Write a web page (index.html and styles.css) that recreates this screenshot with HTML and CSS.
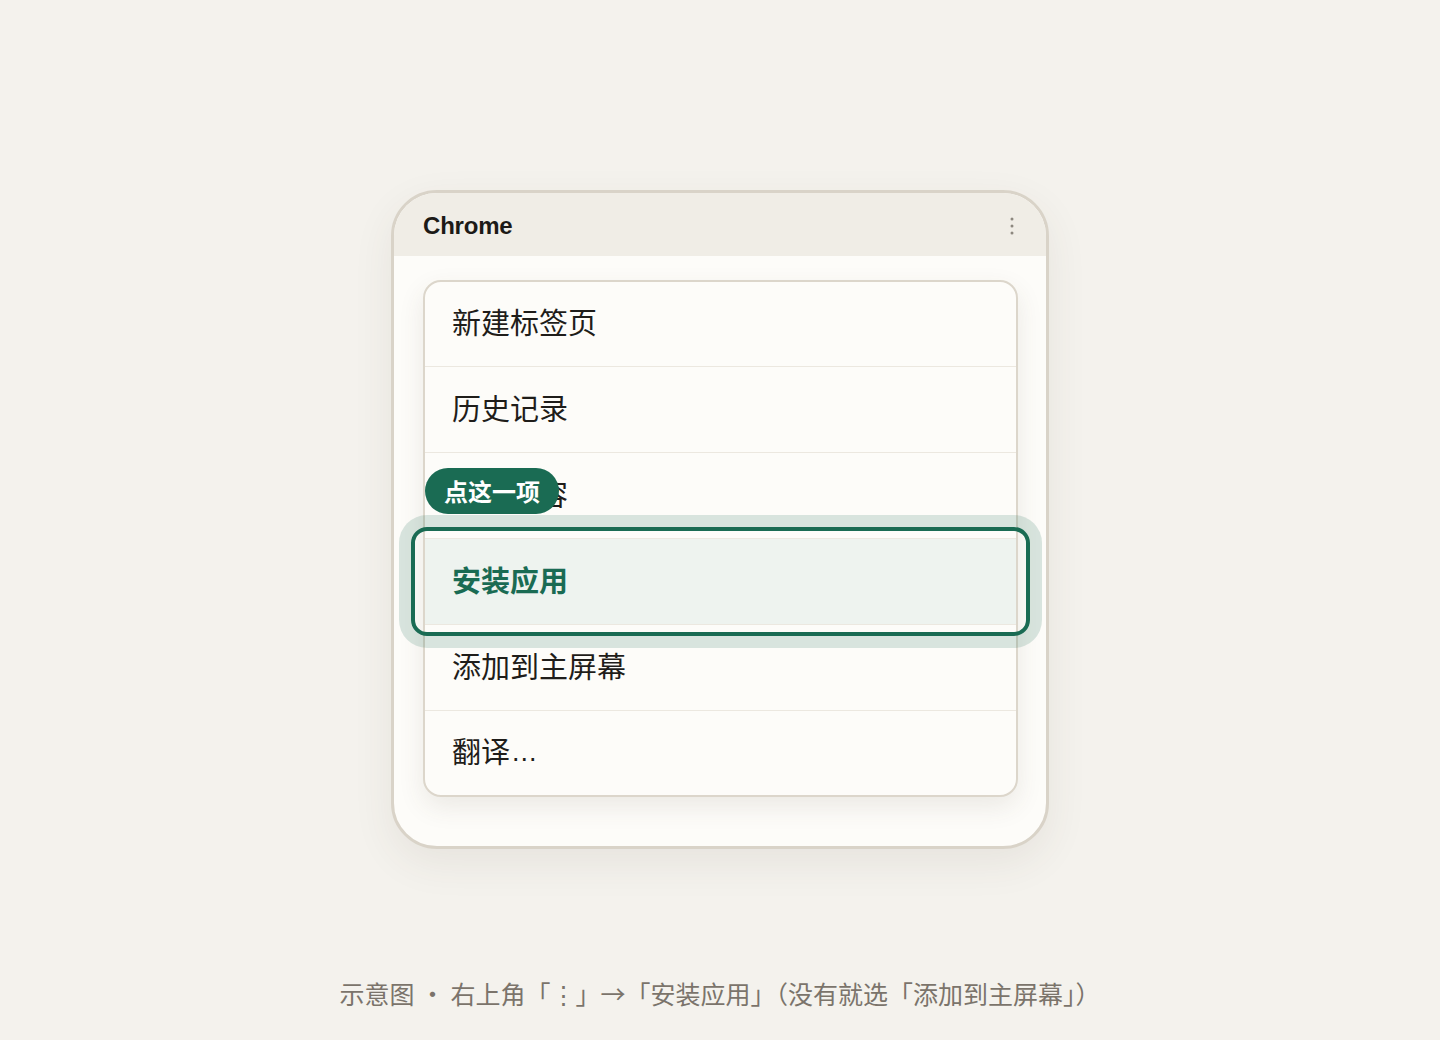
FILE: index.html
```html
<!DOCTYPE html>
<html lang="zh-CN">
<head>
<meta charset="utf-8">
<title>Chrome 安装应用示意图</title>
<link rel="stylesheet" href="styles.css">
</head>
<body>
<main class="page">
  <section class="phone">
    <header class="phone-bar">
      <span class="phone-title">Chrome</span>
      <svg class="kebab" width="6" height="18" viewBox="0 0 6 18" aria-hidden="true">
        <circle cx="3" cy="2" r="1.5"/>
        <circle cx="3" cy="9" r="1.5"/>
        <circle cx="3" cy="16" r="1.5"/>
      </svg>
    </header>
    <div class="phone-body">
      <ul class="menu">
        <li class="menu-item">新建标签页</li>
        <li class="menu-item">历史记录</li>
        <li class="menu-item">下载内容</li>
        <li class="menu-item is-target">
          <span>安装应用</span>
          <span class="ring"></span>
          <span class="badge">点这一项</span>
        </li>
        <li class="menu-item">添加到主屏幕</li>
        <li class="menu-item">翻译<span class="dots">...</span></li>
      </ul>
    </div>
  </section>
  <p class="caption">示意图 · 右上角「⋮」→「安装应用」（没有就选「添加到主屏幕」）</p>
</main>
</body>
</html>
```
FILE: styles.css
```css
* { box-sizing: border-box; }
html, body {
  margin: 0;
  padding: 0;
  background: #f4f2ed;
  font-family: "Noto Sans CJK SC", "Noto Sans", sans-serif;
  color: #1f1d1a;
}
.page {
  height: 1040px;
  display: flex;
  flex-direction: column;
  align-items: center;
  padding-top: 190px;
}
.phone {
  width: 658px;
  border: 3px solid #d9d3c8;
  border-radius: 46px;
  background: #fdfcf9;
  box-shadow: 0 14px 40px rgba(80, 70, 50, 0.08);
  position: relative;
}
.phone-bar {
  height: 63px;
  background: #f0ede6;
  border-radius: 43px 43px 0 0;
  display: flex;
  align-items: center;
  justify-content: space-between;
  padding: 0 31px 0 29px;
}
.phone-title {
  font-family: "Liberation Sans", Arial, sans-serif;
  font-weight: 700;
  font-size: 24px;
  color: #1c1a17;
  letter-spacing: -0.2px;
  margin-top: 3px;
}
.kebab { fill: #8d887f; margin-top: 2px; }
.phone-body {
  padding: 25px 28px 49px 29px;
}
.menu {
  list-style: none;
  margin: 0;
  padding: 0;
  border: 2px solid #dcd6cb;
  border-radius: 18px;
  background: #fdfcf9;
  box-shadow: 0 10px 26px rgba(80, 70, 50, 0.10);
  margin-top: -1px;
}
.menu-item {
  height: 86px;
  display: flex;
  align-items: center;
  padding: 0 0 6px 27px;
  font-size: 29px;
  border-top: 1px solid #ece8e0;
  position: relative;
}
.menu-item:first-child { border-top: none; height: 84px; }
.menu-item:last-child { height: 85px; }
.menu-item.is-target {
  background: #eef3ef;
  color: #1a6b53;
  font-weight: 700;
}
.dots {
  font-family: "Liberation Sans", Arial, sans-serif;
  font-size: 27px;
  letter-spacing: 1px;
  margin-left: 2px;
  align-self: center;
  padding-top: 4px;
}
.ring {
  position: absolute;
  left: -14px;
  right: -14px;
  top: -12px;
  bottom: -12px;
  border: 4px solid #1a6b53;
  border-radius: 16px;
  box-shadow: 0 0 0 12px rgba(26, 107, 83, 0.16);
  pointer-events: none;
}
.badge {
  position: absolute;
  left: 0;
  top: -71px;
  height: 46px;
  width: 134px;
  border-radius: 23px;
  background: #1a6b53;
  color: #ffffff;
  font-size: 24px;
  font-weight: 700;
  display: flex;
  align-items: center;
  justify-content: center;
  padding-bottom: 2px;
  z-index: 2;
}
.caption {
  margin: 126px 0 0;
  font-size: 25px;
  color: #7b746b;
}
```
